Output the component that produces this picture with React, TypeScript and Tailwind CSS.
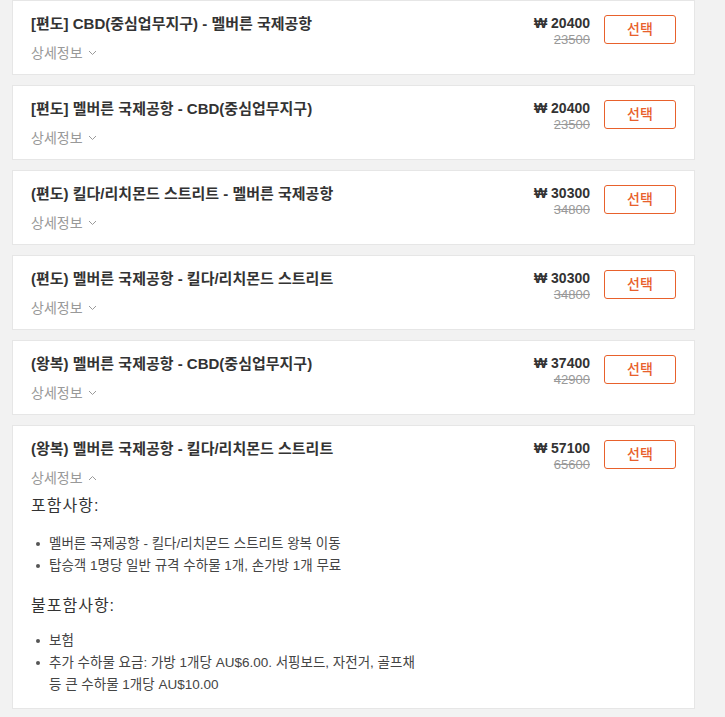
import React from "react";

type Item = { title: string; price: string; orig: string; open?: boolean };

const items: Item[] = [
  { title: "[편도] CBD(중심업무지구) - 멜버른 국제공항", price: "20400", orig: "23500" },
  { title: "[편도] 멜버른 국제공항 - CBD(중심업무지구)", price: "20400", orig: "23500" },
  { title: "(편도) 킬다/리치몬드 스트리트 - 멜버른 국제공항", price: "30300", orig: "34800" },
  { title: "(편도) 멜버른 국제공항 - 킬다/리치몬드 스트리트", price: "30300", orig: "34800" },
  { title: "(왕복) 멜버른 국제공항 - CBD(중심업무지구)", price: "37400", orig: "42900" },
  { title: "(왕복) 멜버른 국제공항 - 킬다/리치몬드 스트리트", price: "57100", orig: "65600", open: true },
];

function Chevron({ up }: { up?: boolean }) {
  return (
    <svg width="9" height="6" viewBox="0 0 9 6" className="ml-[5px]" fill="none">
      {up ? (
        <path d="M1 5 L4.5 1.5 L8 5" stroke="#9a9a9a" strokeWidth="1" />
      ) : (
        <path d="M1 1 L4.5 4.5 L8 1" stroke="#9a9a9a" strokeWidth="1" />
      )}
    </svg>
  );
}

function Bullet({ children }: { children: React.ReactNode }) {
  return (
    <li className="flex text-[13.5px] leading-[22px] text-[#444]">
      <span className="w-[18px] shrink-0 flex items-start pt-[9px]">
        <span className="ml-[5px] w-[4px] h-[4px] rounded-full bg-[#555]" />
      </span>
      <span>{children}</span>
    </li>
  );
}

function Card({ item }: { item: Item }) {
  return (
    <div className="bg-white border border-[#e6e6e6] px-[18px] pt-[14px] pb-[11px]">
      <div className="flex justify-between items-start">
        <div>
          <div className="text-[15px] leading-[18px] font-bold text-[#333]">{item.title}</div>
          <div className="mt-[10px] flex items-center text-[14px] leading-[20px] text-[#999]">
            상세정보
            <Chevron up={item.open} />
          </div>
        </div>
        <div className="flex items-start gap-[14px]">
          <div className="text-right">
            <div className="text-[14px] leading-[16px] font-bold text-[#333]">₩ {item.price}</div>
            <div className="text-[13px] leading-[18px] text-[#999] line-through">{item.orig}</div>
          </div>
          <button className="w-[72px] h-[29px] border border-[#e8612c] rounded-[3px] text-[14px] font-medium text-[#e8612c] bg-white flex items-center justify-center">
            선택
          </button>
        </div>
      </div>
      {item.open && (
        <div className="pb-[1px]">
          <div className="mt-[7px] text-[16px] leading-[22px] tracking-[1px] text-[#333]">포함사항:</div>
          <ul className="mt-[16px]">
            <Bullet>멜버른 국제공항 - 킬다/리치몬드 스트리트 왕복 이동</Bullet>
            <Bullet>탑승객 1명당 일반 규격 수하물 1개, 손가방 1개 무료</Bullet>
          </ul>
          <div className="mt-[18px] text-[16px] leading-[22px] tracking-[1px] text-[#333]">불포함사항:</div>
          <ul className="mt-[13px]">
            <Bullet>보험</Bullet>
            <Bullet>
              추가 수하물 요금: 가방 1개당 AU$6.00. 서핑보드, 자전거, 골프채
              <br />
              등 큰 수하물 1개당 AU$10.00
            </Bullet>
          </ul>
        </div>
      )}
    </div>
  );
}

export default function App() {
  return (
    <div
      className="min-h-[717px] w-[725px] bg-[#f2f2f2]"
      style={{ fontFamily: '"Liberation Sans", "Noto Sans CJK KR", sans-serif' }}
    >
      <div className="ml-[12px] w-[683px] flex flex-col gap-[10px]">
        {items.map((it, i) => (
          <Card key={i} item={it} />
        ))}
      </div>
    </div>
  );
}
